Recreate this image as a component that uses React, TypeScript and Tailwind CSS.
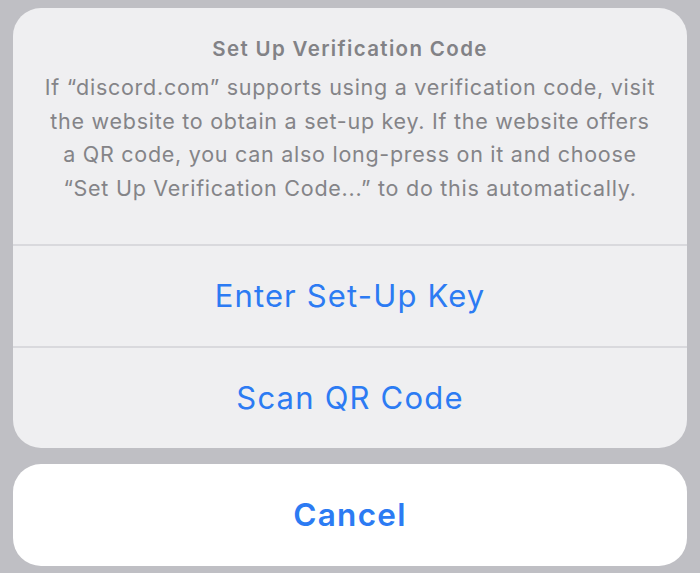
export default function App() {
  return (
    <div
      className="w-[700px] h-[573px] bg-[#bfbfc4] px-[13px] pt-[8px] flex flex-col"
      style={{ fontFamily: 'Inter, "Noto Sans", sans-serif' }}
    >
      <div className="bg-[#efeff1] rounded-[28px] overflow-hidden flex flex-col">
        <div className="pt-[29px] pb-[39px] flex flex-col items-center text-[#848488]">
          <div className="text-[20.5px] leading-[24px] font-semibold tracking-[1.35px] text-[#828286]">Set Up Verification Code</div>
          <div className="mt-[10px] text-[21.5px] leading-[33.5px] tracking-[0.73px] text-center flex flex-col items-center">
            <span className="whitespace-nowrap">If “discord.com” supports using a verification code, visit</span>
            <span className="whitespace-nowrap">the website to obtain a set-up key. If the website offers</span>
            <span className="whitespace-nowrap">a QR code, you can also long-press on it and choose</span>
            <span className="whitespace-nowrap">“Set Up Verification Code...” to do this automatically.</span>
          </div>
        </div>
        <div className="h-[102px] border-t-2 border-[#d9d9dd] flex items-center justify-center text-[31px] tracking-[1.15px] text-[#2c7bf3]">
          Enter Set-Up Key
        </div>
        <div className="h-[102px] border-t-2 border-[#d9d9dd] flex items-center justify-center text-[31px] tracking-[1.2px] text-[#2c7bf3]">
          Scan QR Code
        </div>
      </div>
      <div className="mt-[16px] h-[102px] bg-white rounded-[28px] flex items-center justify-center text-[31.5px] font-semibold tracking-[1.3px] text-[#2c7bf3]">
        Cancel
      </div>
    </div>
  );
}
